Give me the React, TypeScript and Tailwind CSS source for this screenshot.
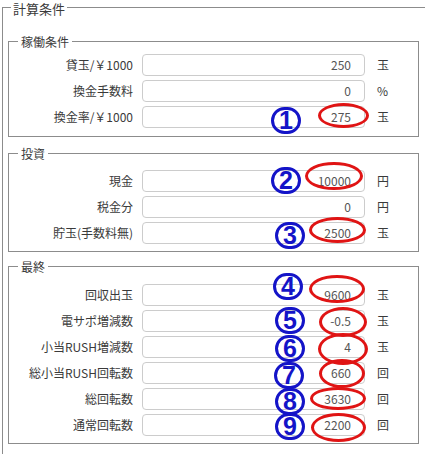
type Row = { label: string; value: string; unit: string };

type Group = { title: string; rows: Row[]; box: string };

const groups: Group[] = [
  {
    title: '稼働条件',
    box: 'mt-[20px] pt-[6px] pb-[8px]',
    rows: [
      { label: '貸玉/￥1000', value: '250', unit: '玉' },
      { label: '換金手数料', value: '0', unit: '%' },
      { label: '換金率/￥1000', value: '275', unit: '玉' },
    ],
  },
  {
    title: '投資',
    box: 'mt-[9px] pt-[10px] pb-[7px]',
    rows: [
      { label: '現金', value: '10000', unit: '円' },
      { label: '税金分', value: '0', unit: '円' },
      { label: '貯玉(手数料無)', value: '2500', unit: '玉' },
    ],
  },
  {
    title: '最終',
    box: 'mt-[7px] pt-[11px] pb-[7px]',
    rows: [
      { label: '回収出玉', value: '9600', unit: '玉' },
      { label: '電サポ増減数', value: '-0.5', unit: '玉' },
      { label: '小当RUSH増減数', value: '4', unit: '玉' },
      { label: '総小当RUSH回転数', value: '660', unit: '回' },
      { label: '総回転数', value: '3630', unit: '回' },
      { label: '通常回転数', value: '2200', unit: '回' },
    ],
  },
];

// hand-drawn markers over the form: circled number + red ring around the value
const marks = [
  { n: '1', badge: 'left-[271px] top-[107px]', ring: 'left-[318px] top-[103px] w-[51px] h-[25px]' },
  { n: '2', badge: 'left-[271px] top-[167px]', ring: 'left-[305px] top-[162px] w-[58px] h-[28px]' },
  { n: '3', badge: 'left-[275px] top-[222px]', ring: 'left-[309px] top-[217px] w-[57px] h-[26px]' },
  { n: '4', badge: 'left-[273px] top-[273px]', ring: 'left-[309px] top-[275px] w-[56px] h-[28px]' },
  { n: '5', badge: 'left-[275px] top-[307px]', ring: 'left-[319px] top-[307px] w-[48px] h-[30px]' },
  { n: '6', badge: 'left-[275px] top-[335px]', ring: 'left-[318px] top-[333px] w-[50px] h-[32px]' },
  { n: '7', badge: 'left-[274px] top-[362px]', ring: 'left-[319px] top-[359px] w-[46px] h-[29px]' },
  { n: '8', badge: 'left-[275px] top-[388px]', ring: 'left-[310px] top-[387px] w-[56px] h-[23px]' },
  { n: '9', badge: 'left-[275px] top-[413px]', ring: 'left-[311px] top-[413px] w-[55px] h-[29px]' },
];

const Field = ({ row }: { row: Row }) => (
  <div className="flex h-[22px] items-center">
    <label className="w-[124px] shrink-0 text-right text-[12px] leading-[22px] text-[#3a3a3a]">
      {row.label}
    </label>
    <div className="ml-[9px] h-[22px] w-[223px] shrink-0 rounded-[4px] border border-[#ccc] bg-white pr-[13px] text-right text-[12px] leading-[20px] text-[#555]">
      {row.value}
    </div>
    <span className="ml-[12px] text-[12px] leading-[22px] text-[#3a3a3a]">{row.unit}</span>
  </div>
);

const App = () => {
  return (
    <div
      className="relative h-[454px] w-[425px] overflow-hidden bg-white"
      style={{ fontFamily: '"Noto Sans CJK JP", "Liberation Sans", sans-serif' }}
    >
      <fieldset className="ml-[2px] h-[470px] border border-r-0 border-b-0 border-[#8c8c8c]">
        <legend className="ml-[8px] px-[2px] text-[13px] leading-[14px] text-[#3a3a3a]">
          <span className="relative top-[2px]">計算条件</span>
        </legend>

        {groups.map((g) => (
          <fieldset
            key={g.title}
            className={`ml-[5px] w-[411px] border border-[#8c8c8c] ${g.box}`}
          >
            <legend className="ml-[9px] px-[3px] text-[12px] leading-[14px] text-[#3a3a3a]">
              <span className="relative top-[1px]">{g.title}</span>
            </legend>
            <div className="flex flex-col gap-[4px]">
              {g.rows.map((r) => (
                <Field key={r.label} row={r} />
              ))}
            </div>
          </fieldset>
        ))}
      </fieldset>

      {marks.map((m) => (
        <div key={m.n}>
          <div
            className={`absolute ${m.badge} flex h-[27px] w-[30px] items-center justify-center rounded-full border-[3px] border-[#1414c8] text-[25px] font-bold leading-none text-[#1414c8]`}
            style={{ fontFamily: '"Liberation Sans", Arial, sans-serif' }}
          >
            {m.n}
          </div>
          <div className={`absolute ${m.ring} rounded-[50%] border-[3px] border-[#e01414]`} />
        </div>
      ))}
    </div>
  );
};

export default App;
